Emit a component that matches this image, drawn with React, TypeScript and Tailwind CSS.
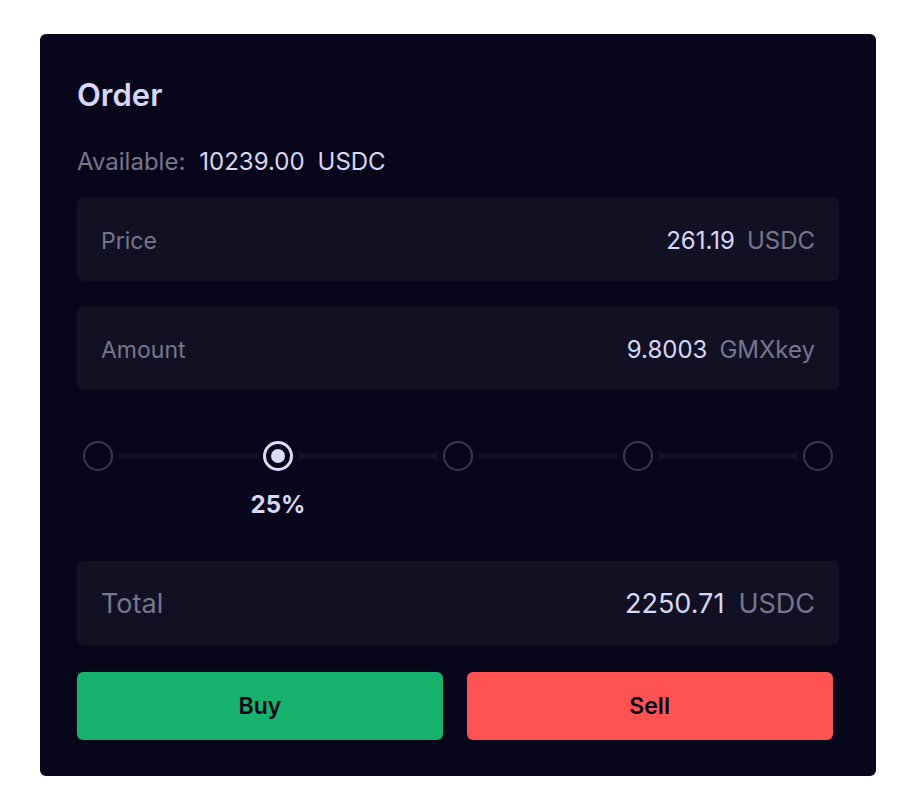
import React from 'react'

const steps = [0, 25, 50, 75, 100]

function Field({ label, value, unit, big }: { label: string; value: string; unit: string; big?: boolean }) {
  return (
    <div className={`flex h-[84px] items-center justify-between rounded-md bg-[#121123] px-6 ${big ? 'pt-[2px]' : 'pt-[4px]'}`}>
      <span className={`${big ? 'text-[27px]' : 'text-[23px]'} text-[#77758f]`}>{label}</span>
      <span className={`flex items-center ${big ? 'gap-[14px] text-[27px]' : 'gap-3 text-[24px]'}`}>
        <span className="text-[#d7d7f7]">{value}</span>
        <span className="text-[#77758f]">{unit}</span>
      </span>
    </div>
  )
}

export default function App() {
  const selected = 25

  return (
    <div className="min-h-screen bg-white pl-[40px] pt-[34px]" style={{ fontFamily: 'Inter, "Noto Sans", sans-serif' }}>
      <div className="w-[836px] rounded-md bg-[#08061a] px-[37px] pb-[36px] pt-[43px]">
        {/* Header */}
        <h2 className="text-[31px] font-semibold leading-[36px] text-[#d7d7f9]">Order</h2>

        <div className="mt-[33px] flex items-center text-[24px] leading-[32px]">
          <span className="text-[#77758f]">Available:</span>
          <span className="ml-[14px] text-[#d7d7f7]">10239.00</span>
          <span className="ml-[13px] text-[#d7d7f7]">USDC</span>
        </div>

        {/* Inputs */}
        <div className="mt-[19px] flex flex-col gap-[25px]">
          <Field label="Price" value="261.19" unit="USDC" />
          <Field label="Amount" value="9.8003" unit="GMXkey" />
        </div>

        {/* Percent slider */}
        <div className="mt-[51px] flex items-center px-[6px]">
          {steps.map((s, i) => (
            <React.Fragment key={s}>
              {i > 0 && <div className="mx-[6px] h-[6px] flex-1 bg-[#131222]" />}
              <div className="relative">
                {s === selected ? (
                  <div className="flex h-[30px] w-[30px] items-center justify-center rounded-full border-[3px] border-[#dcdcfa]">
                    <div className="h-[14px] w-[14px] rounded-full bg-[#dcdcfa]" />
                  </div>
                ) : (
                  <div className="h-[30px] w-[30px] rounded-full border-2 border-[#393850]" />
                )}
                {s === selected && (
                  <span className="absolute left-1/2 top-[50px] -translate-x-1/2 text-[24px] font-bold leading-[28px] text-[#d7d7f7]">
                    {s}%
                  </span>
                )}
              </div>
            </React.Fragment>
          ))}
        </div>

        {/* Total */}
        <div className="mt-[90px]">
          <Field label="Total" value="2250.71" unit="USDC" big />
        </div>

        {/* Actions */}
        <div className="mt-[27px] flex gap-6">
          <button className="h-[68px] w-[48%] rounded-md bg-[#18b26f] text-[23px] font-semibold text-[#08061a]">Buy</button>
          <button className="h-[68px] w-[48%] rounded-md bg-[#ff5252] text-[23px] font-semibold text-[#08061a]">Sell</button>
        </div>
      </div>
    </div>
  )
}
